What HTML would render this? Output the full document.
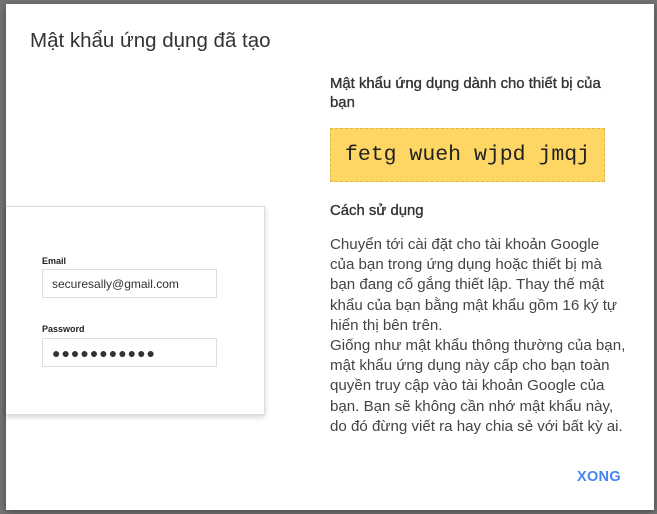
<!DOCTYPE html>
<html><head><meta charset="utf-8"><style>
html,body{margin:0;padding:0;width:657px;height:514px;overflow:hidden;background:#757575;font-family:"Liberation Sans",Arial,sans-serif;}
.dlg{position:absolute;left:6px;top:4px;width:648px;height:506px;background:#fff;box-shadow:0 2px 8px rgba(0,0,0,.4);}
.title{position:absolute;left:24px;top:25px;font-size:20.5px;color:#333;}
.card{position:absolute;left:0;top:202px;width:258px;height:207px;background:#fff;border:1px solid #ddd;border-left:none;box-shadow:0 2px 5px rgba(0,0,0,.18);}
.lbl{position:absolute;left:36px;font-size:9px;color:#222;font-weight:bold;}
.inp{position:absolute;left:36px;height:29px;border:1px solid #ddd;font-size:12px;color:#333;line-height:29px;padding-left:9px;box-sizing:border-box;width:175px;}
.r{position:absolute;left:324px;color:#444;white-space:nowrap;}
.h{font-size:14.9px;color:#333;line-height:19px;-webkit-text-stroke:0.35px #333;}
.code{position:absolute;left:324px;top:124px;width:275px;height:54px;box-sizing:border-box;background:#fdd663;border:1px dashed #e0b84a;font-family:"Liberation Mono","DejaVu Sans Mono",monospace;font-size:21.5px;color:#222;line-height:52px;text-align:center;}
.p{font-size:15.1px;line-height:20.2px;color:#444;}
.btn{position:absolute;left:571px;top:465px;color:#4285f4;font-weight:bold;font-size:14.5px;letter-spacing:.3px;}
</style></head><body>
<div class="dlg">
<div class="title">Mật khẩu ứng dụng đã tạo</div>
<div class="card">
<div class="lbl" style="top:49px">Email</div>
<div class="inp" style="top:62px">securesally@gmail.com</div>
<div class="lbl" style="top:117px">Password</div>
<div class="inp" style="top:131px;font-size:14px;letter-spacing:1px">●●●●●●●●●●●</div>
</div>
<div class="r h" style="top:71px">Mật khẩu ứng dụng dành cho thiết bị của<br>bạn</div>
<div class="code">fetg wueh wjpd jmqj</div>
<div class="r h" style="top:198px">Cách sử dụng</div>
<div class="r p" style="top:231px">Chuyển tới cài đặt cho tài khoản Google<br>của bạn trong ứng dụng hoặc thiết bị mà<br>bạn đang cố gắng thiết lập. Thay thế mật<br>khẩu của bạn bằng mật khẩu gồm 16 ký tự<br>hiển thị bên trên.<br>Giống như mật khẩu thông thường của bạn,<br>mật khẩu ứng dụng này cấp cho bạn toàn<br>quyền truy cập vào tài khoản Google của<br>bạn. Bạn sẽ không cần nhớ mật khẩu này,<br>do đó đừng viết ra hay chia sẻ với bất kỳ ai.</div>
<div class="btn">XONG</div>
</div>
</body></html>
